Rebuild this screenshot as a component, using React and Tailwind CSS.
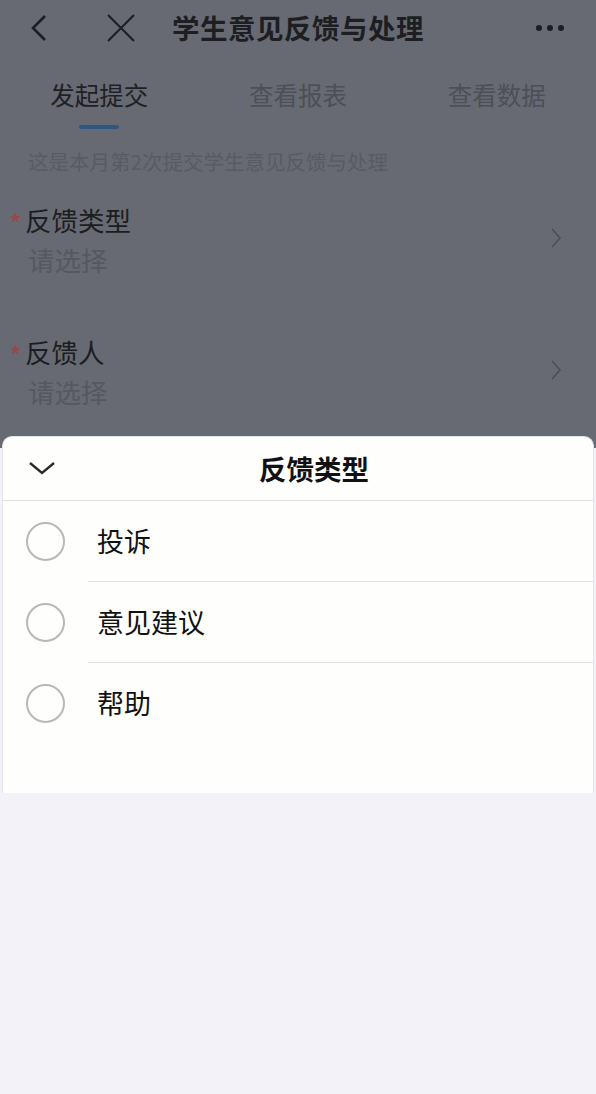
import React from 'react';

const font = { fontFamily: '"Noto Sans CJK SC", "Noto Sans", sans-serif' };

const FieldRow = ({ label }) => (
  <div className="shrink-0 flex items-start justify-between pr-[34px] h-[132px]">
    <div className="flex flex-col pl-[10px] pt-[16px]">
      <div className="flex items-start">
        <span className="text-[#98484c] text-[22px] font-bold leading-none mt-[8px] w-[15px]">*</span>
        <span className="text-[26.5px] leading-[36px] text-[#1c1d21]">{label}</span>
      </div>
      <span className="text-[26.5px] leading-[36px] text-[#55585f] pl-[18px] mt-[4px]">请选择</span>
    </div>
    <svg width="12" height="22" viewBox="0 0 12 22" className="mt-[41px]">
      <path d="M2 2 L10 11 L2 20" fill="none" stroke="#4c4f56" strokeWidth="1.6" />
    </svg>
  </div>
);

const Option = ({ text, last }) => (
  <div className="flex items-stretch h-[81px]">
    <div className="w-[85px] flex items-center pl-[23px]">
      <span className="w-[39px] h-[39px] rounded-full border-2 border-[#b8b8b8]" />
    </div>
    <div className={`flex-1 flex items-center pl-[9px] ${last ? '' : 'border-b border-[#e2e2e2]'}`}>
      <span className="text-[27px] text-[#111]">{text}</span>
    </div>
  </div>
);

export default function App() {
  return (
    <div className="w-[596px] h-[1094px] flex flex-col bg-[#f2f2f8] overflow-hidden" style={font}>
      {/* dimmed page behind the sheet */}
      <div className="shrink-0 h-[436px] bg-[#676a72] flex flex-col overflow-hidden">
        <div className="shrink-0 h-[56px] flex items-center px-[28px]">
          <svg width="22" height="28" viewBox="0 0 22 28">
            <path d="M17 2 L5 14 L17 26" fill="none" stroke="#1d1e22" strokeWidth="2.6" />
          </svg>
          <svg width="30" height="30" viewBox="0 0 30 30" className="ml-[56px]">
            <path d="M2 2 L28 28 M28 2 L2 28" fill="none" stroke="#1d1e22" strokeWidth="2" />
          </svg>
          <span className="ml-[36px] text-[27.5px] font-bold text-[#1d1e22] tracking-[0.5px]">学生意见反馈与处理</span>
          <div className="ml-auto flex gap-[5px] pr-[4px]">
            <span className="w-[6px] h-[6px] rounded-full bg-[#1d1e22]" />
            <span className="w-[6px] h-[6px] rounded-full bg-[#1d1e22]" />
            <span className="w-[6px] h-[6px] rounded-full bg-[#1d1e22]" />
          </div>
        </div>
        <div className="shrink-0 flex h-[76px]">
          <div className="flex-1 flex flex-col items-center pt-[22px]">
            <span className="text-[24.5px] leading-[34px] text-[#1f2024]">发起提交</span>
            <span className="w-[40px] h-[4px] bg-[#2c5782] mt-[13px] rounded-sm" />
          </div>
          <div className="flex-1 flex justify-center pt-[22px]">
            <span className="text-[24.5px] leading-[34px] text-[#4c4f56]">查看报表</span>
          </div>
          <div className="flex-1 flex justify-center pt-[22px]">
            <span className="text-[24.5px] leading-[34px] text-[#4c4f56]">查看数据</span>
          </div>
        </div>
        <div className="shrink-0 pl-[28px] pt-[14px] h-[54px] text-[20.5px] text-[#585b62]">这是本月第2次提交学生意见反馈与处理</div>
        <FieldRow label="反馈类型" />
        <FieldRow label="反馈人" />
      </div>

      {/* bottom sheet */}
      <div className="shrink-0 bg-[linear-gradient(#676a72_0_12px,#f2f2f8_12px)]">
        <div className="mx-[2px] h-[357px] bg-[#fefefc] rounded-t-[10px] border-x border-t border-[#e4e4e8] flex flex-col">
          <div className="relative h-[64px] flex items-center justify-center pl-[32px] border-b border-[#e0e0e0]">
            <svg width="28" height="16" viewBox="0 0 28 16" className="absolute left-[25px] top-[23px]">
              <path d="M2 3 L14 13 L26 3" fill="none" stroke="#2a2a2a" strokeWidth="2.4" />
            </svg>
            <span className="text-[27.5px] font-bold text-[#111]">反馈类型</span>
          </div>
          <Option text="投诉" />
          <Option text="意见建议" />
          <Option text="帮助" last />
        </div>
      </div>
    </div>
  );
}
